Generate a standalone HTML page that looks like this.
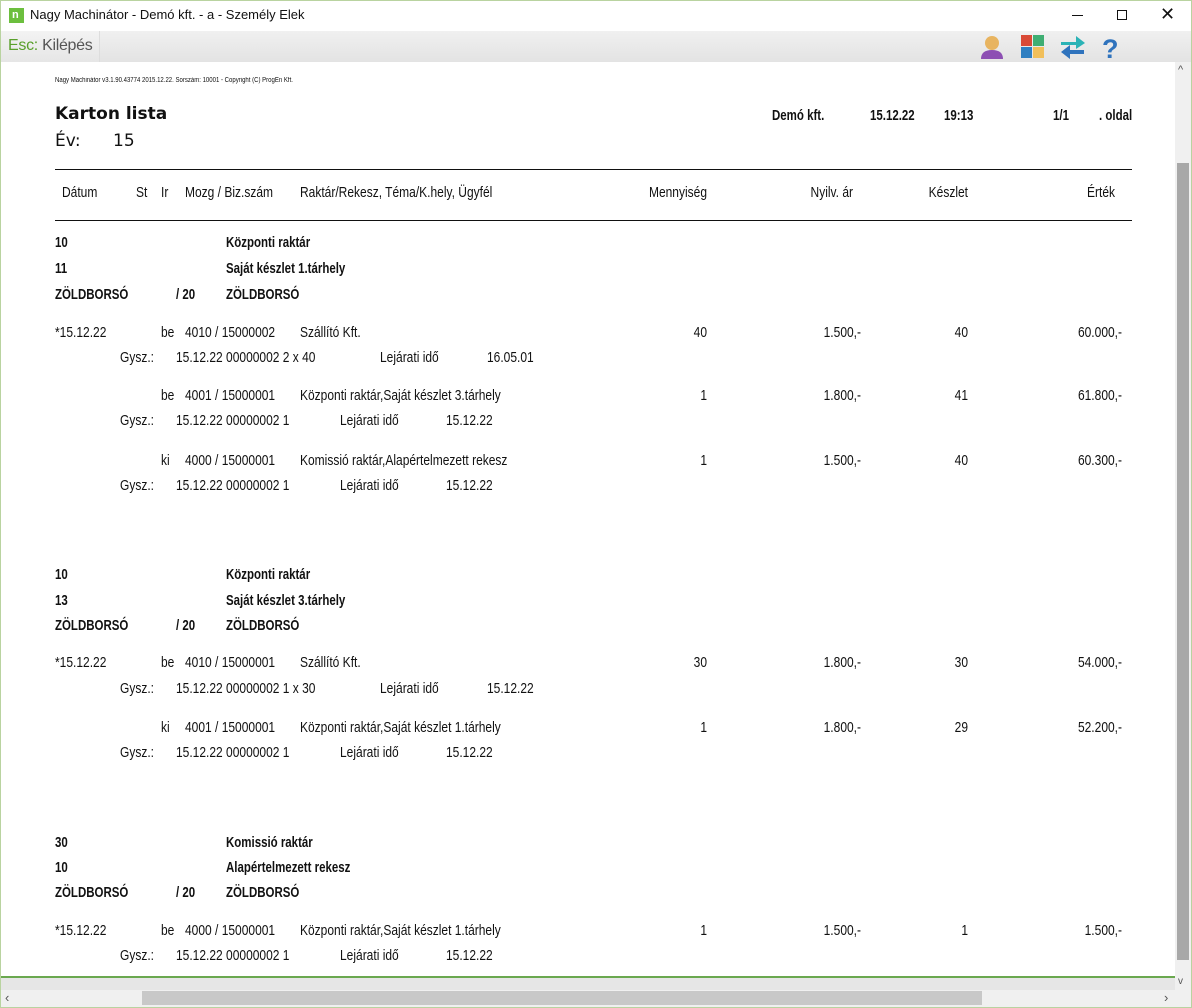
<!DOCTYPE html>
<html><head><meta charset="utf-8"><style>
*{margin:0;padding:0;box-sizing:border-box}
body{width:1192px;height:1008px;overflow:hidden;background:#fff;position:relative;font-family:"Liberation Sans",sans-serif;color:#111}
.w{position:absolute;inset:0;border:1px solid #b9d3a0}
.t{position:absolute;font-size:15px;line-height:18px;white-space:nowrap;transform:scaleX(0.80);transform-origin:left center}
.b{font-weight:bold;transform:scaleX(0.765)}
.r{text-align:right;width:120px;transform-origin:right center}
.hl{position:absolute;left:55px;width:1077px;height:1px;background:#111}
</style></head><body>
<div class="w"></div>
<!-- title bar -->
<div style="position:absolute;left:9px;top:8px;width:15px;height:15px;background:#6cbf3e"></div>
<div style="position:absolute;left:12px;top:9px;color:#fff;font:bold 11px 'Liberation Sans',sans-serif">n</div>
<div style="position:absolute;left:30px;top:7px;font:13px 'Liberation Sans',sans-serif;color:#111">Nagy Machinátor - Demó kft. - a - Személy Elek</div>
<div style="position:absolute;left:1072px;top:15px;width:11px;height:1px;background:#111"></div>
<div style="position:absolute;left:1117px;top:10px;width:10px;height:10px;border:1px solid #111"></div>
<div style="position:absolute;left:1160px;top:4px;font:18px 'Liberation Sans',sans-serif;color:#111">✕</div>
<!-- toolbar -->
<div style="position:absolute;left:1px;top:31px;width:1190px;height:31px;background:linear-gradient(#f0f0f0,#e3e3e3)"></div>
<div style="position:absolute;left:1px;top:31px;width:99px;height:31px;background:linear-gradient(#f3f3f3,#e6e6e6);border-right:1px solid #ddd"></div>
<div style="position:absolute;left:8px;top:37px;font:16px 'Liberation Sans',sans-serif;letter-spacing:-0.3px"><span style="color:#5aa02c">Esc:</span><span style="color:#555"> Kilépés</span></div>
<svg style="position:absolute;left:975px;top:31px" width="160" height="31">
<circle cx="17" cy="12" r="7" fill="#e8b460"/><path d="M6 28 Q6 19 17 19 Q28 19 28 28Z" fill="#8d4fb3"/>
<rect x="46" y="4" width="11" height="11" fill="#d94a36"/><rect x="58" y="4" width="11" height="11" fill="#3fae73"/>
<rect x="46" y="16" width="11" height="11" fill="#2f7fc1"/><rect x="58" y="16" width="11" height="11" fill="#f1bf5a"/>
<path d="M86 11 H101 V5 L110 12 L101 18 V14 H86Z" fill="#2bb3b6"/><path d="M109 19 H95 V14 L86 21 L95 28 V23 H109Z" fill="#2f73bd"/>
<text x="127" y="27" font-family="Liberation Sans" font-weight="bold" font-size="27" fill="#2f73bd">?</text>
</svg>
<!-- scrollbars -->
<div style="position:absolute;left:1175px;top:62px;width:16px;height:928px;background:#f0f0f0"></div>
<div style="position:absolute;left:1177px;top:163px;width:12px;height:797px;background:#a8a8a8"></div>
<div style="position:absolute;left:1178px;top:64px;font-size:11px;color:#555">^</div>
<div style="position:absolute;left:1178px;top:976px;font-size:10px;color:#555">v</div>
<div style="position:absolute;left:1px;top:976px;width:1174px;height:2px;background:#6aa84f"></div>
<div style="position:absolute;left:1px;top:978px;width:1174px;height:12px;background:#e6e6e6"></div>
<div style="position:absolute;left:1px;top:990px;width:1190px;height:17px;background:#f0f0f0"></div>
<div style="position:absolute;left:142px;top:991px;width:840px;height:14px;background:#c8c8c8"></div>
<div style="position:absolute;left:5px;top:990px;font-size:13px;color:#555">‹</div>
<div style="position:absolute;left:1164px;top:990px;font-size:13px;color:#555">›</div>

<!-- report header -->
<div class="t" style="left:55px;top:76px;font-size:7px;line-height:9px;transform:scaleX(0.86)">Nagy Machinátor v3.1.90.43774 2015.12.22. Sorszám: 10001 - Copyright (C) ProgEn Kft.</div>
<div style="position:absolute;left:55px;top:104px;font:bold 17px 'DejaVu Sans',sans-serif">Karton lista</div>
<div style="position:absolute;left:55px;top:131px;font:17px 'DejaVu Sans',sans-serif">Év:&nbsp;&nbsp;&nbsp;&nbsp;&nbsp; 15</div>
<div class="t b" style="left:772px;top:107px">Demó kft.</div>
<div class="t b" style="left:870px;top:107px">15.12.22</div>
<div class="t b" style="left:944px;top:107px">19:13</div>
<div class="t b" style="left:1053px;top:107px">1/1</div>
<div class="t b" style="left:1099px;top:107px">. oldal</div>
<div class="hl" style="top:169px"></div>
<div class="t" style="left:62px;top:184px">Dátum</div>
<div class="t" style="left:136px;top:184px">St</div>
<div class="t" style="left:161px;top:184px">Ir</div>
<div class="t" style="left:185px;top:184px">Mozg / Biz.szám</div>
<div class="t" style="left:300px;top:184px">Raktár/Rekesz, Téma/K.hely, Ügyfél</div>
<div class="t r" style="left:587px;top:184px">Mennyiség</div>
<div class="t r" style="left:733px;top:184px">Nyilv. ár</div>
<div class="t r" style="left:848px;top:184px">Készlet</div>
<div class="t r" style="left:995px;top:184px">Érték</div>
<div class="hl" style="top:220px"></div>

<!-- group 1 -->
<div class="t b" style="left:55px;top:234px">10</div><div class="t b" style="left:226px;top:234px">Központi raktár</div>
<div class="t b" style="left:55px;top:260px">11</div><div class="t b" style="left:226px;top:260px">Saját készlet 1.tárhely</div>
<div class="t b" style="left:55px;top:286px">ZÖLDBORSÓ</div><div class="t b" style="left:176px;top:286px">/ 20</div><div class="t b" style="left:226px;top:286px">ZÖLDBORSÓ</div>

<div class="t" style="left:55px;top:324px">*15.12.22</div><div class="t" style="left:161px;top:324px">be</div><div class="t" style="left:185px;top:324px">4010 / 15000002</div><div class="t" style="left:300px;top:324px">Szállító Kft.</div>
<div class="t r" style="left:587px;top:324px">40</div><div class="t r" style="left:741px;top:324px">1.500,-</div><div class="t r" style="left:848px;top:324px">40</div><div class="t r" style="left:1002px;top:324px">60.000,-</div>
<div class="t" style="left:120px;top:349px">Gysz.:</div><div class="t" style="left:176px;top:349px">15.12.22 00000002 2 x 40</div><div class="t" style="left:380px;top:349px">Lejárati idő</div><div class="t" style="left:487px;top:349px">16.05.01</div>

<div class="t" style="left:161px;top:387px">be</div><div class="t" style="left:185px;top:387px">4001 / 15000001</div><div class="t" style="left:300px;top:387px">Központi raktár,Saját készlet 3.tárhely</div>
<div class="t r" style="left:587px;top:387px">1</div><div class="t r" style="left:741px;top:387px">1.800,-</div><div class="t r" style="left:848px;top:387px">41</div><div class="t r" style="left:1002px;top:387px">61.800,-</div>
<div class="t" style="left:120px;top:412px">Gysz.:</div><div class="t" style="left:176px;top:412px">15.12.22 00000002 1</div><div class="t" style="left:340px;top:412px">Lejárati idő</div><div class="t" style="left:446px;top:412px">15.12.22</div>

<div class="t" style="left:161px;top:452px">ki</div><div class="t" style="left:185px;top:452px">4000 / 15000001</div><div class="t" style="left:300px;top:452px">Komissió raktár,Alapértelmezett rekesz</div>
<div class="t r" style="left:587px;top:452px">1</div><div class="t r" style="left:741px;top:452px">1.500,-</div><div class="t r" style="left:848px;top:452px">40</div><div class="t r" style="left:1002px;top:452px">60.300,-</div>
<div class="t" style="left:120px;top:477px">Gysz.:</div><div class="t" style="left:176px;top:477px">15.12.22 00000002 1</div><div class="t" style="left:340px;top:477px">Lejárati idő</div><div class="t" style="left:446px;top:477px">15.12.22</div>

<!-- group 2 -->
<div class="t b" style="left:55px;top:566px">10</div><div class="t b" style="left:226px;top:566px">Központi raktár</div>
<div class="t b" style="left:55px;top:592px">13</div><div class="t b" style="left:226px;top:592px">Saját készlet 3.tárhely</div>
<div class="t b" style="left:55px;top:617px">ZÖLDBORSÓ</div><div class="t b" style="left:176px;top:617px">/ 20</div><div class="t b" style="left:226px;top:617px">ZÖLDBORSÓ</div>

<div class="t" style="left:55px;top:654px">*15.12.22</div><div class="t" style="left:161px;top:654px">be</div><div class="t" style="left:185px;top:654px">4010 / 15000001</div><div class="t" style="left:300px;top:654px">Szállító Kft.</div>
<div class="t r" style="left:587px;top:654px">30</div><div class="t r" style="left:741px;top:654px">1.800,-</div><div class="t r" style="left:848px;top:654px">30</div><div class="t r" style="left:1002px;top:654px">54.000,-</div>
<div class="t" style="left:120px;top:680px">Gysz.:</div><div class="t" style="left:176px;top:680px">15.12.22 00000002 1 x 30</div><div class="t" style="left:380px;top:680px">Lejárati idő</div><div class="t" style="left:487px;top:680px">15.12.22</div>

<div class="t" style="left:161px;top:719px">ki</div><div class="t" style="left:185px;top:719px">4001 / 15000001</div><div class="t" style="left:300px;top:719px">Központi raktár,Saját készlet 1.tárhely</div>
<div class="t r" style="left:587px;top:719px">1</div><div class="t r" style="left:741px;top:719px">1.800,-</div><div class="t r" style="left:848px;top:719px">29</div><div class="t r" style="left:1002px;top:719px">52.200,-</div>
<div class="t" style="left:120px;top:744px">Gysz.:</div><div class="t" style="left:176px;top:744px">15.12.22 00000002 1</div><div class="t" style="left:340px;top:744px">Lejárati idő</div><div class="t" style="left:446px;top:744px">15.12.22</div>

<!-- group 3 -->
<div class="t b" style="left:55px;top:834px">30</div><div class="t b" style="left:226px;top:834px">Komissió raktár</div>
<div class="t b" style="left:55px;top:859px">10</div><div class="t b" style="left:226px;top:859px">Alapértelmezett rekesz</div>
<div class="t b" style="left:55px;top:884px">ZÖLDBORSÓ</div><div class="t b" style="left:176px;top:884px">/ 20</div><div class="t b" style="left:226px;top:884px">ZÖLDBORSÓ</div>

<div class="t" style="left:55px;top:922px">*15.12.22</div><div class="t" style="left:161px;top:922px">be</div><div class="t" style="left:185px;top:922px">4000 / 15000001</div><div class="t" style="left:300px;top:922px">Központi raktár,Saját készlet 1.tárhely</div>
<div class="t r" style="left:587px;top:922px">1</div><div class="t r" style="left:741px;top:922px">1.500,-</div><div class="t r" style="left:848px;top:922px">1</div><div class="t r" style="left:1002px;top:922px">1.500,-</div>
<div class="t" style="left:120px;top:947px">Gysz.:</div><div class="t" style="left:176px;top:947px">15.12.22 00000002 1</div><div class="t" style="left:340px;top:947px">Lejárati idő</div><div class="t" style="left:446px;top:947px">15.12.22</div>
</body></html>
